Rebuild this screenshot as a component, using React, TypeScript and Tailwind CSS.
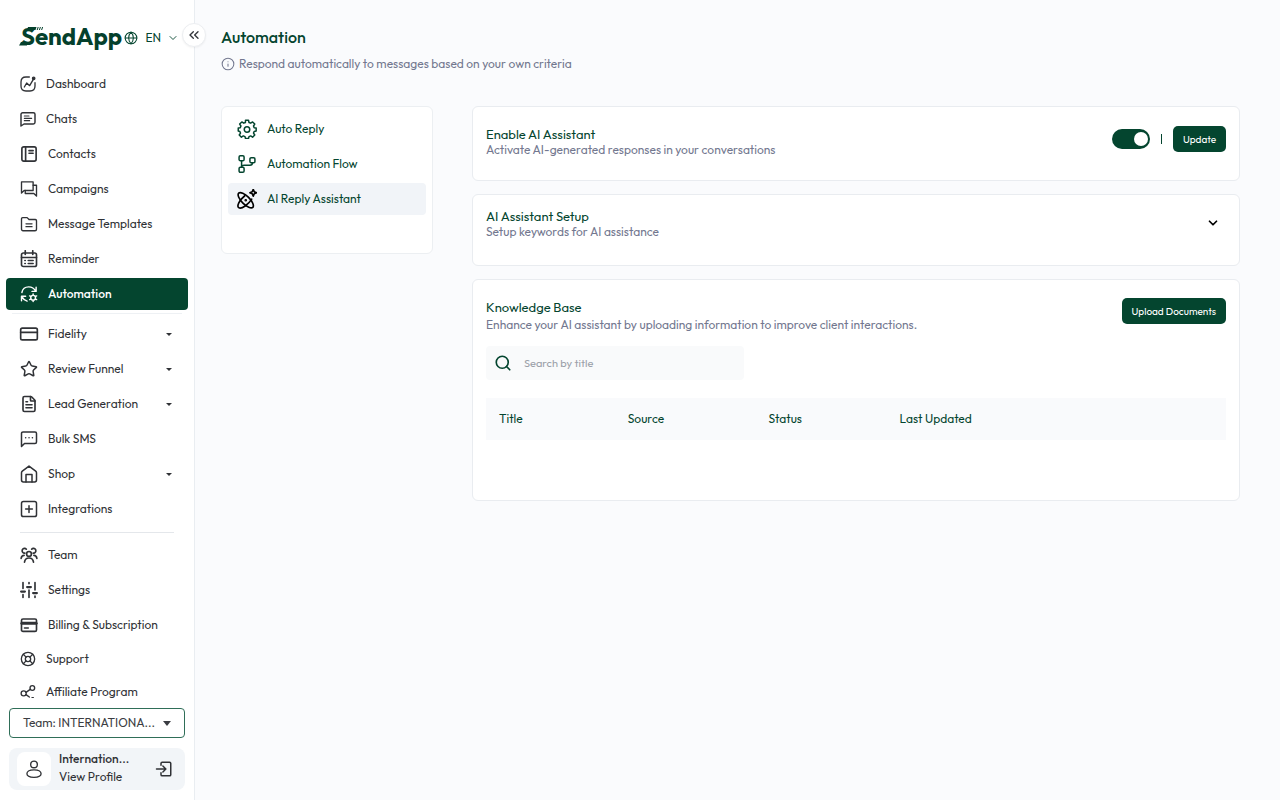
import { useState, type ReactNode } from "react";
import {
  ChevronDown,
  ChevronsLeft,
  CreditCard,
  FileText,
  Globe,
  Info,
  LifeBuoy,
  Search,
  Star,
} from "lucide-react";

type IconProps = { className?: string; children?: ReactNode; strokeWidth?: number };

function Icon({ className = "size-[18px]", children, strokeWidth = 2 }: IconProps) {
  return (
    <svg
      viewBox="0 0 24 24"
      className={className}
      fill="none"
      stroke="currentColor"
      strokeWidth={strokeWidth}
      strokeLinecap="round"
      strokeLinejoin="round"
      aria-hidden="true"
    >
      {children}
    </svg>
  );
}

const gearTeeth =
  "M10.2 1.5h3.6l.6 2.7 2 .8 2.3-1.5 2.6 2.6-1.5 2.3.8 2 2.4.4v3.6l-2.4.5-.8 2 1.5 2.3-2.6 2.6-2.3-1.5-2 .8-.6 2.4h-3.6l-.6-2.4-2-.8-2.3 1.5-2.6-2.6 1.5-2.3-.8-2L1.5 14.4v-3.6l2.4-.4.8-2-1.5-2.3 2.6-2.6 2.3 1.5 2-.8z";

const icons = {
  dashboard: (
    <Icon className="size-4" strokeWidth={2}>
      <path d="M14 1.5H9Q1.5 1.5 1.5 9v6q0 7.500 7.500 7.500h6q7.500 0 7.500-7.500v-5" />
      <path d="M6.500 16.500l3.500-6 4.500 4L20 5" />
      <circle cx="20.500" cy="3.500" r="1.800" fill="currentColor" />
    </Icon>
  ),
  chats: (
    <Icon className="size-4" strokeWidth={2.2}>
      <path d="M4 2.500h16A2.500 2.500 0 0 1 22.500 5v12a2.500 2.500 0 0 1-2.500 2.500H6l-4.500 3V5A2.500 2.500 0 0 1 4 2.500z" />
      <path d="M6.500 7.500h7M6.500 11h11M6.500 14.500h8" strokeWidth={1.7} />
    </Icon>
  ),
  contacts: (
    <Icon strokeWidth={2.2}>
      <rect x="2.500" y="2.500" width="19" height="19" rx="2.500" />
      <path d="M7.500 3v18M12 7.500h5.500M12 11h5.500" />
    </Icon>
  ),
  campaigns: (
    <Icon strokeWidth={1.8}>
      <path d="M2 2.500h15.500v11.500H5.500L2 17.500z" />
      <path d="M17.500 7H22v14.500L18.500 18H7v-4" />
    </Icon>
  ),
  templates: (
    <Icon strokeWidth={1.8}>
      <path d="M2 19V5a1.500 1.500 0 0 1 1.500-1.500h6L12 6h8.500A1.500 1.500 0 0 1 22 7.500V19a2 2 0 0 1-2 2H4a2 2 0 0 1-2-2z" />
      <path d="M8 11.800h8M8 15.500h8" />
    </Icon>
  ),
  reminder: (
    <Icon strokeWidth={2.2}>
      <rect x="2" y="4" width="20" height="18" rx="2.500" />
      <path d="M2 10h20M7 1v5M17 1v5" />
      <path d="M6.500 14h.5M6.500 18h.5M11 14h6.500M11 18h6.500" />
    </Icon>
  ),
  automation: (
    <Icon strokeWidth={1.9}>
      <path d="M2.500 10C3.500 5 7 2.500 11.500 2.500c4 0 7.500 2 9.500 6M21.500 3v5.500H16" />
      <path d="M9.500 21.500C6 20.500 4 18.500 2.500 15.500M2 21v-6h5.500" />
      <circle cx="17.500" cy="17" r="3.200" />
      <path d="M17.500 12v1.500M17.500 20.500V22M12.800 14.500l1.500.8M20.700 18.700l1.500.8M12.800 19.500l1.500-.8M20.700 15.300l1.500-.8" />
    </Icon>
  ),
  fidelity: <CreditCard className="-mx-px size-5" strokeWidth={2} />,
  star: <Star className="size-[18px]" />,
  file: <FileText className="size-[18px]" strokeWidth={2.2} />,
  sms: (
    <Icon>
      <path d="M4 2.500h16a2 2 0 0 1 2 2V16a2 2 0 0 1-2 2H6l-4 4V4.500a2 2 0 0 1 2-2z" />
      <path d="M7.500 10.300h.1M12 10.300h.1M16.500 10.300h.1" />
    </Icon>
  ),
  shop: (
    <Icon>
      <path d="M2 10.500a3 3 0 0 1 1.100-2.300L12 1.500l8.900 6.700A3 3 0 0 1 22 10.500V20a2.500 2.500 0 0 1-2.500 2.500h-15A2.500 2.500 0 0 1 2 20z" />
      <path d="M8 22.500V12.500h8v10" />
    </Icon>
  ),
  plus: (
    <Icon>
      <rect x="2" y="2" width="20" height="20" rx="2.500" />
      <path d="M12 7.500v9M7.500 12h9" />
    </Icon>
  ),
  team: (
    <Icon strokeWidth={2.2}>
      <circle cx="12" cy="10.500" r="3.200" />
      <path d="M6 21.500c.5-3.500 2.800-5.500 6-5.500s5.500 2 6 5.500" />
      <path d="M6.500 9.500a3.200 3.200 0 1 1 2-5.200M17.500 9.500a3.200 3.200 0 1 0-2-5.200" />
      <path d="M1.500 16.500c.4-2.500 2-4 4-4M22.500 16.500c-.4-2.500-2-4-4-4" />
    </Icon>
  ),
  settings: (
    <Icon strokeWidth={2.2}>
      <path d="M4 2v8M4 18v4M12 2v1.500M12 12v10M20 2v10M20 20v2" />
      <path d="M1.500 14h5M9.500 8h5M17.500 16h5" strokeWidth={3} />
    </Icon>
  ),
  billing: (
    <Icon strokeWidth={2.2}>
      <rect x="2" y="4" width="20" height="16.500" rx="2" />
      <path d="M2.500 9.500h19" strokeWidth={4} />
      <path d="M6 16h5" />
    </Icon>
  ),
  support: <LifeBuoy className="size-4" />,
  affiliate: (
    <Icon className="size-4" strokeWidth={2}>
      <circle cx="18.500" cy="6" r="3.500" />
      <circle cx="5.500" cy="14" r="3.800" />
      <path d="M9 12.500l6.300-4.500M9 16l5 3.500M18 20.500h2" />
    </Icon>
  ),
};

type NavItem = { label: string; icon: keyof typeof icons; menu?: boolean; compact?: boolean };

const groups: NavItem[][] = [
  [
    { label: "Dashboard", icon: "dashboard" },
    { label: "Chats", icon: "chats" },
    { label: "Contacts", icon: "contacts" },
    { label: "Campaigns", icon: "campaigns" },
    { label: "Message Templates", icon: "templates" },
    { label: "Reminder", icon: "reminder" },
    { label: "Automation", icon: "automation" },
  ],
  [
    { label: "Fidelity", icon: "fidelity", menu: true },
    { label: "Review Funnel", icon: "star", menu: true },
    { label: "Lead Generation", icon: "file", menu: true },
    { label: "Bulk SMS", icon: "sms" },
    { label: "Shop", icon: "shop", menu: true },
    { label: "Integrations", icon: "plus" },
  ],
  [
    { label: "Team", icon: "team" },
    { label: "Settings", icon: "settings" },
    { label: "Billing & Subscription", icon: "billing" },
    { label: "Support", icon: "support", compact: true },
    { label: "Affiliate Program", icon: "affiliate", compact: true },
  ],
];

function Logo() {
  return (
    <a href="#home" className="relative flex pb-1 text-2xl leading-8 font-bold text-[#04402c]">
      <span className="pl-0.5">SendApp</span>
      <svg viewBox="0 0 26 24" className="absolute top-1 left-0 h-6 w-[26px]" aria-hidden="true">
        <path d="M2 18h6v3.500H0z" fill="currentColor" />
        <path d="M9 3h8.500l-1 3H8z" fill="currentColor" />
        <path d="M19.200 3l-1 3M21.400 3l-1 3M23.600 3l-1 3" stroke="currentColor" strokeWidth="1" />
      </svg>
    </a>
  );
}

function NavLink({ item }: { item: NavItem }) {
  const active = item.label === "Automation";
  return (
    <a
      href="#nav"
      aria-current={active ? "page" : undefined}
      className={
        "flex shrink-0 items-center gap-2.5 rounded px-3.5 text-xs " +
        (item.compact ? "h-[30px] " : "h-8 ") +
        (active ? "bg-[#04452f] font-medium text-white" : "text-[#303236] hover:bg-gray-50")
      }
    >
      <span className="flex shrink-0 items-center">{icons[item.icon]}</span>
      <span className="grow whitespace-nowrap">{item.label}</span>
      {item.menu && (
        <svg viewBox="0 0 10 5" className="mr-0.5 h-[3px] w-1.5" aria-hidden="true">
          <path d="M0 0h10L5 5z" fill="currentColor" />
        </svg>
      )}
    </a>
  );
}

function NavGroup({ items }: { items: NavItem[] }) {
  return (
    <div className="flex flex-col gap-[3px]">
      {items.map((item) => (
        <NavLink key={item.label} item={item} />
      ))}
    </div>
  );
}

function Sidebar() {
  return (
    <aside className="relative flex h-screen w-[195px] shrink-0 flex-col border-r border-[#e9edf1] bg-white">
      <div className="flex items-center pt-5 pr-[15px] pb-3 pl-[19px]">
        <Logo />
        <button type="button" className="ml-auto flex items-center text-xs text-[#04452f]">
          <Globe className="size-3.5" strokeWidth={1.8} />
          <span className="ml-[7px]">EN</span>
          <ChevronDown className="ml-1.5 size-3" strokeWidth={1.8} />
        </button>
      </div>
      <button
        type="button"
        aria-label="Collapse sidebar"
        className="absolute top-[23px] -right-3 flex size-6 items-center justify-center rounded-full border border-[#eceef1] bg-white text-[#33363b] shadow-xs"
      >
        <ChevronsLeft className="size-4" strokeWidth={2} />
      </button>

      <nav className="flex min-h-0 grow flex-col overflow-y-auto px-1.5 [scrollbar-width:none]">
        <NavGroup items={groups[0]} />
        <hr className="mx-1.5 mt-[3px] mb-1 shrink-0 border-[#eef1f4]" />
        <NavGroup items={groups[1]} />
        <hr className="mx-3.5 mt-[7px] mb-1.5 shrink-0 border-[#e4e7eb]" />
        <NavGroup items={groups[2]} />
      </nav>

      <div className="flex shrink-0 flex-col gap-2.5 px-[9px] pt-2.5 pb-2.5">
        <button
          type="button"
          className="flex h-[30px] items-center justify-between rounded border border-[#2f6e58] px-[13px] text-xs text-[#3b3d42]"
        >
          <span>Team: INTERNATIONA...</span>
          <svg viewBox="0 0 10 6" className="h-[5px] w-2" aria-hidden="true">
            <path d="M0 0h10L5 6z" fill="currentColor" />
          </svg>
        </button>
        <div className="flex h-[42px] items-center rounded-lg bg-[#f2f5f8] pr-3 pl-2 text-[#303236]">
          <span className="flex size-[34px] items-center justify-center rounded-lg bg-white">
            <Icon className="size-5" strokeWidth={1.6}>
              <circle cx="12" cy="6.500" r="4" />
              <path d="M12 13c5 0 8.500 2 8.500 4.800S18 22 12 22s-8.500-1.400-8.500-4.200S7 13 12 13z" />
            </Icon>
          </span>
          <a href="#profile" className="ml-2 flex grow flex-col pb-0.5 text-xs leading-[18px]">
            <span className="font-medium">Internation...</span>
            <span>View Profile</span>
          </a>
          <button type="button" aria-label="Log out">
            <Icon>
              <path d="M8 7V4.500A1.500 1.500 0 0 1 9.500 3h10A1.500 1.500 0 0 1 21 4.500v15a1.500 1.500 0 0 1-1.500 1.500h-10A1.500 1.500 0 0 1 8 19.500V17" />
              <path d="M2 12h12M10.500 8l4 4-4 4" />
            </Icon>
          </button>
        </div>
      </div>
    </aside>
  );
}

function SubMenu() {
  const row = "flex h-8 items-center gap-2.5 rounded px-[9px] text-xs text-[#04452f]";
  return (
    <nav className="flex h-[148px] w-[212px] shrink-0 flex-col gap-[3px] rounded-md border border-[#eceff2] bg-white px-1.5 pt-1.5">
      <a href="#auto-reply" className={row}>
        <Icon className="size-5" strokeWidth={1.8}>
          <path d={gearTeeth} />
          <circle cx="12" cy="12.500" r="3.300" />
        </Icon>
        Auto Reply
      </a>
      <a href="#flow" className={row}>
        <Icon className="size-5" strokeWidth={1.8}>
          <rect x="2.500" y="2" width="6" height="6" rx="1.500" />
          <rect x="2.500" y="16" width="6" height="6" rx="1.500" />
          <rect x="15.500" y="4.500" width="6" height="6" rx="1.500" />
          <path d="M5.500 8v8M18.500 10.500c0 2-1 3-3 3h-7q-3 0-3 2.500" />
        </Icon>
        Automation Flow
      </a>
      <a href="#ai" aria-current="page" className={row + " bg-[#f1f4f8]"}>
        <Icon className="size-5 text-black">
          <ellipse cx="10.500" cy="13.500" rx="12" ry="4.800" transform="rotate(45 10.500 13.500)" />
          <path d="M3 -4.600A12 4.800 0 1 0 6 4.100" transform="translate(10.500 13.500) rotate(-45)" />
          <circle cx="10.500" cy="13.500" r=".6" fill="currentColor" />
          <path d="M19.500 .500l1.200 2.800 2.800 1.200-2.800 1.200-1.200 2.800-1.200-2.800-2.800-1.200 2.800-1.200z" />
        </Icon>
        AI Reply Assistant
      </a>
    </nav>
  );
}

const card = "rounded-md border border-[#e9ecf0] bg-white px-[13px]";
const primary = "h-[26px] rounded-[5px] bg-[#04452f] px-2.5 text-[10px] text-white";

function SettingText({ title, text }: { title: string; text: string }) {
  return (
    <div>
      <h2 className="text-[13px] leading-4 text-[#04452f]">{title}</h2>
      <p className="text-xs leading-4 text-[#73788f]">{text}</p>
    </div>
  );
}

export default function App() {
  const [enabled, setEnabled] = useState(true);
  const [query, setQuery] = useState("");

  return (
    <div className="flex min-h-screen bg-[#fafbfd] font-['Outfit','Lato',sans-serif]">
      <Sidebar />

      <main className="min-w-0 grow pt-[26px] pr-10 pl-[26px]">
        <h1 className="text-base leading-[22px] font-medium text-[#04452f]">Automation</h1>
        <p className="mt-1.5 flex items-center gap-1 text-xs leading-5 text-[#73788f]">
          <Info className="size-3.5" strokeWidth={1.8} />
          Respond automatically to messages based on your own criteria
        </p>

        <div className="mt-8 flex items-start gap-[39px]">
          <SubMenu />

          <div className="flex min-w-0 grow flex-col gap-[13px]">
            <section className={card + " flex items-start justify-between pt-[19px] pb-[22px]"}>
              <SettingText title="Enable AI Assistant" text="Activate AI-generated responses in your conversations" />
              <div className="flex items-center gap-2.5">
                <label className="relative flex h-5 w-[38px] cursor-pointer">
                  <input
                    type="checkbox"
                    role="switch"
                    aria-label="Enable AI Assistant"
                    checked={enabled}
                    onChange={(e) => setEnabled(e.target.checked)}
                    className="peer h-5 w-[38px] cursor-pointer appearance-none rounded-full bg-gray-300 checked:bg-[#04452f]"
                  />
                  <span className="pointer-events-none absolute top-[3px] left-[3px] size-3.5 rounded-full bg-white peer-checked:left-[22px]" />
                </label>
                <span className="mx-px h-2.5 w-px bg-[#04452f]" />
                <button type="button" className={primary}>
                  Update
                </button>
              </div>
            </section>

            <section className={card + " flex items-start justify-between pt-[13px] pb-[25px]"}>
              <SettingText title="AI Assistant Setup" text="Setup keywords for AI assistance" />
              <button type="button" aria-label="Expand" className="mt-2 mr-1.5">
                <ChevronDown className="size-3.5 text-black" strokeWidth={3} />
              </button>
            </section>

            <section className={card + " pt-[18px] pb-[60px]"}>
              <div className="flex items-start justify-between">
                <div>
                  <h2 className="text-[13px] leading-[18px] text-[#04452f]">Knowledge Base</h2>
                  <p className="text-xs leading-[18px] text-[#73788f]">
                    Enhance your AI assistant by uploading information to improve client interactions.
                  </p>
                </div>
                <button type="button" className={primary}>
                  Upload Documents
                </button>
              </div>

              <label className="mt-3 flex h-[34px] w-[258px] items-center gap-3 rounded bg-[#f9fafb] px-2">
                <Search className="size-[18px] text-[#04452f]" strokeWidth={2.2} />
                <input
                  type="text"
                  aria-label="Search by title"
                  placeholder="Search by title"
                  value={query}
                  onChange={(e) => setQuery(e.target.value)}
                  className="min-w-0 grow bg-transparent text-[11px] text-[#3b3d42] outline-none placeholder:text-[#9ca1a9]"
                />
              </label>

              <table className="mt-[18px] w-full table-fixed bg-[#f9fafc] text-left text-xs text-[#04452f]">
                <colgroup>
                  <col className="w-[17%]" />
                  <col className="w-[19%]" />
                  <col className="w-[18%]" />
                  <col />
                </colgroup>
                <thead>
                  <tr className="h-[42px]">
                    <th className="pl-[13px] font-normal">Title</th>
                    <th className="pl-4 font-normal">Source</th>
                    <th className="pl-4 font-normal">Status</th>
                    <th className="pl-3.5 font-normal">Last Updated</th>
                  </tr>
                </thead>
                <tbody />
              </table>
            </section>
          </div>
        </div>
      </main>
    </div>
  );
}
